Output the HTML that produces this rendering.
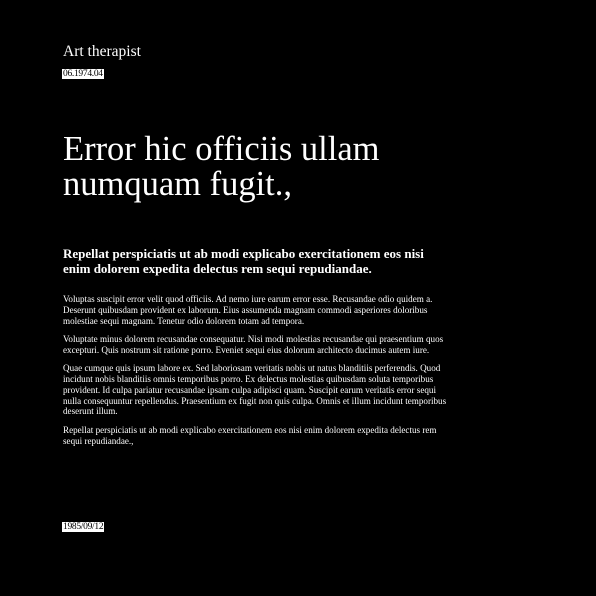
<!DOCTYPE html>
<html><head><meta charset="utf-8"><style>
body{margin:0;background:#000;width:596px;height:596px;overflow:hidden;font-family:"Liberation Serif",serif;color:#fff;position:relative}
.a{position:absolute;left:63px}
.t{top:42px;font-size:15.5px;line-height:19px}
.d{font-size:9.5px;line-height:10px;background:#fff;color:#000;padding:0 1px;letter-spacing:-0.3px}
.h{top:132px;font-size:34.5px;line-height:35px;width:400px}
.s{top:246px;font-size:13px;line-height:15px;font-weight:bold;width:390px}
.b{top:294px;font-size:9.1px;line-height:10.8px;width:385px}
.b p{margin:0 0 7.6px}
</style></head><body>
<div class="a t">Art therapist</div>
<div class="a d" style="top:69px;left:62px">06.1974.04</div>
<div class="a h">Error hic officiis ullam numquam fugit.,</div>
<div class="a s">Repellat perspiciatis ut ab modi explicabo exercitationem eos nisi enim dolorem expedita delectus rem sequi repudiandae.</div>
<div class="a b">
<p>Voluptas suscipit error velit quod officiis. Ad nemo iure earum error esse. Recusandae odio quidem a. Deserunt quibusdam provident ex laborum. Eius assumenda magnam commodi asperiores doloribus molestiae sequi magnam. Tenetur odio dolorem totam ad tempora.</p>
<p>Voluptate minus dolorem recusandae consequatur. Nisi modi molestias recusandae qui praesentium quos excepturi. Quis nostrum sit ratione porro. Eveniet sequi eius dolorum architecto ducimus autem iure.</p>
<p>Quae cumque quis ipsum labore ex. Sed laboriosam veritatis nobis ut natus blanditiis perferendis. Quod incidunt nobis blanditiis omnis temporibus porro. Ex delectus molestias quibusdam soluta temporibus provident. Id culpa pariatur recusandae ipsam culpa adipisci quam. Suscipit earum veritatis error sequi nulla consequuntur repellendus. Praesentium ex fugit non quis culpa. Omnis et illum incidunt temporibus deserunt illum.</p>
<p>Repellat perspiciatis ut ab modi explicabo exercitationem eos nisi enim dolorem expedita delectus rem sequi repudiandae.,</p>
</div>
<div class="a d" style="top:522px;left:62px">1985/09/12</div>
</body></html>
